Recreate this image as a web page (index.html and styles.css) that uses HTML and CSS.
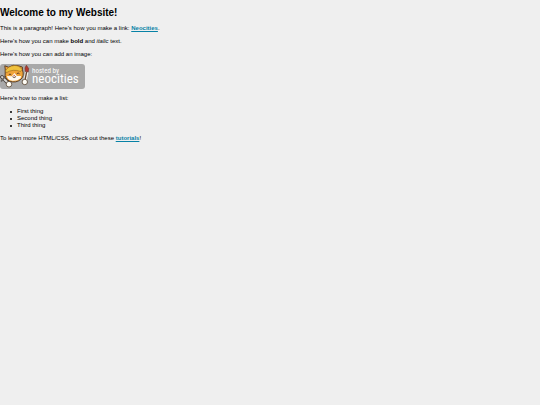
FILE: index.html
```html
<!DOCTYPE html>
<html lang="en">
  <head>
    <meta charset="UTF-8" />
    <meta name="viewport" content="width=device-width, initial-scale=1.0" />
    <title>My Website</title>
    <link rel="stylesheet" href="styles.css">
  </head>
  <body>
    <h1>Welcome to my Website!</h1>

    <p>This is a paragraph! Here's how you make a link: <a href="https://neocities.org">Neocities</a>.</p>

    <p>Here's how you can make <strong>bold</strong> and <em>italic</em> text.</p>

    <p>Here's how you can add an image:</p>
    <svg class="badge" viewBox="0 0 85 25" role="img" aria-label="hosted by neocities">
      <rect width="85" height="25" rx="3" fill="#a9a9a9" />
      <!-- hammer -->
      <path d="M2 13L8 19" stroke="#4d4640" stroke-width="3.8" stroke-linecap="round" />
      <path d="M2 13L8 19" stroke="#d9d9d6" stroke-width="1.8" stroke-linecap="round" />
      <path d="M1.5 17L5 12.5" stroke="#67625e" stroke-width="1.6" stroke-linecap="round" />
      <!-- brush -->
      <path d="M26.6 9L24.6 18" stroke="#f4efe6" stroke-width="3.4" stroke-linecap="round" />
      <path d="M26.6 8L24.8 17" stroke="#654432" stroke-width="1.3" />
      <path d="M25.4 7.5L25 4L26.4 1.2L28.6 4.5L28.2 8Z" fill="#b5382d" stroke="#713026" stroke-width=".6" />
      <!-- cat -->
      <path d="M5.2 5L4.8 1.8L8.5 3.2Q13 .2 18.5 1.8L22.3 3L22.5 6Q24.5 12 21 15.2Q16 19.5 9.5 17.2Q4.3 14.5 5.2 9Z" fill="#f0a43a" stroke="#50351f" stroke-width=".9" />
      <path d="M7 12Q7.5 15.5 10.5 16.2Q16 18 20.6 14.2L21 12L17 12L14.4 9L11.8 12.3Z" fill="#fffaf0" />
      <path d="M5.5 6.8Q8 2 14.5 1.5Q19.5 1.4 22 5.5L20.5 7.5Q13 4.5 6.2 8.8Z" fill="#efc13c" stroke="#95641f" stroke-width=".6" />
      <path d="M9 10.5Q10 9.2 11 10.5M17 9.5Q18.2 8.2 19.3 9.5M12.8 13Q14.2 14.5 15.8 12.8" fill="none" stroke="#4b3028" stroke-width=".9" stroke-linecap="round" />
      <circle cx="14.2" cy="11.5" r=".8" fill="#cf6a54" />
      <!-- paws -->
      <circle cx="9" cy="20.2" r="2.8" fill="#fffdf5" stroke="#54412f" stroke-width=".8" />
      <circle cx="24.8" cy="18" r="2.7" fill="#fffdf5" stroke="#54412f" stroke-width=".8" />
      <text class="badge-small" x="32" y="9">hosted by</text>
      <text class="badge-name" x="32" y="19">neocities</text>
    </svg>

    <p>Here's how to make a list:</p>

    <ul>
      <li>First thing</li>
      <li>Second thing</li>
      <li>Third thing</li>
    </ul>

    <p>To learn more HTML/CSS, check out these <a href="https://neocities.org/tutorials">tutorials</a>!</p>
  </body>
</html>
```
FILE: styles.css
```css
body {
  margin: 8px 0;
  background: #efefef;
  color: #000;
  font-family: "Liberation Sans", Arial, sans-serif;
  font-size: 6px;
  line-height: 7px;
}

h1 {
  margin: 0 0 7px;
  font-size: 10px;
  line-height: 10px;
}

p {
  margin: 6px 0;
}

a {
  color: #0782a6;
  font-weight: bold;
}

ul {
  margin: 6px 0;
  padding-left: 10px;
  list-style: none;
}

li {
  display: flex;
  align-items: center;
  gap: 5px;
}

li::before {
  content: "";
  width: 2px;
  height: 2px;
  border-radius: 50%;
  background: #000;
}

.badge {
  display: block;
  width: 85px;
  height: 25px;
}

.badge-small,
.badge-name {
  fill: #fff;
  font-family: "Roboto Condensed", Roboto, sans-serif;
}

.badge-small {
  font-size: 7px;
}

.badge-name {
  font-size: 13px;
}
```
